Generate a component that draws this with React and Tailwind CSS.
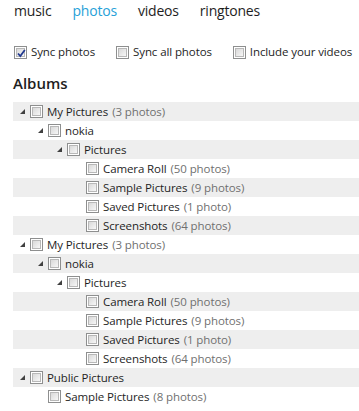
import React from "react";

function Box({ checked }) {
  return (
    <span className="relative flex h-[13px] w-[13px] shrink-0 items-center justify-center border border-[#8e8f8f] bg-white p-[1px]">
      <span className="block h-full w-full border border-[#b8b8b8] bg-gradient-to-br from-[#d9d9d9] to-[#f7f7f7]" />
      {checked && (
        <svg className="absolute left-[1px] top-[1px]" width="11" height="11" viewBox="0 0 11 11">
          <path d="M2 5.5 L4.3 8 L8.8 2" fill="none" stroke="#21398f" strokeWidth="1.8" />
        </svg>
      )}
    </span>
  );
}

function Tri() {
  return (
    <svg width="5" height="5" viewBox="0 0 5 5" className="block">
      <polygon points="5,0 5,5 0,5" fill="#404040" />
    </svg>
  );
}

const indent = ["pl-[7px]", "pl-[25px]", "pl-[44px]", "pl-[63px]"];

const group = [
  { l: 0, t: "My Pictures", c: "(3 photos)", e: true },
  { l: 1, t: "nokia", e: true },
  { l: 2, t: "Pictures", e: true },
  { l: 3, t: "Camera Roll", c: "(50 photos)" },
  { l: 3, t: "Sample Pictures", c: "(9 photos)" },
  { l: 3, t: "Saved Pictures", c: "(1 photo)" },
  { l: 3, t: "Screenshots", c: "(64 photos)" },
];

const rows = [
  ...group,
  ...group,
  { l: 0, t: "Public Pictures", e: true },
  { l: 1, t: "Sample Pictures", c: "(8 photos)" },
];

export default function App() {
  return (
    <div className="h-[411px] w-[359px] overflow-hidden bg-white font-['Open_Sans',sans-serif] text-[#1e1e1e]">
      <div className="flex gap-[21px] pl-[14px] pt-[1px] text-[14px] leading-[20px] tracking-[-0.2px]">
        <span>music</span>
        <span className="text-[#27a1d8]">photos</span>
        <span>videos</span>
        <span>ringtones</span>
      </div>
      <div className="mt-[23px] flex items-center pl-[14px] text-[11.5px] leading-[16px] tracking-[-0.1px]">
        <Box checked />
        <span className="ml-[4px]">Sync photos</span>
        <span className="ml-[21px]"><Box /></span>
        <span className="ml-[4px]">Sync all photos</span>
        <span className="ml-[21px]"><Box /></span>
        <span className="ml-[4px]">Include your videos</span>
      </div>
      <div className="mt-[13px] pl-[13px] text-[15px] font-semibold leading-[20px]">Albums</div>
      <div className="mt-[9px] pl-[13px] text-[11.5px] tracking-[-0.1px]">
        {rows.map((r, i) => (
          <div
            key={i}
            className={`flex h-[19px] items-center ${indent[r.l]} ${i % 2 === 0 ? "bg-[#eeeeee]" : "bg-white"}`}
          >
            <span className="flex w-[10px] shrink-0 items-center">{r.e && <Tri />}</span>
            <Box />
            <span className="ml-[4px] whitespace-nowrap">
              {r.t}
              {r.c && <span className="ml-[4px] text-[#707070]">{r.c}</span>}
            </span>
          </div>
        ))}
      </div>
    </div>
  );
}
